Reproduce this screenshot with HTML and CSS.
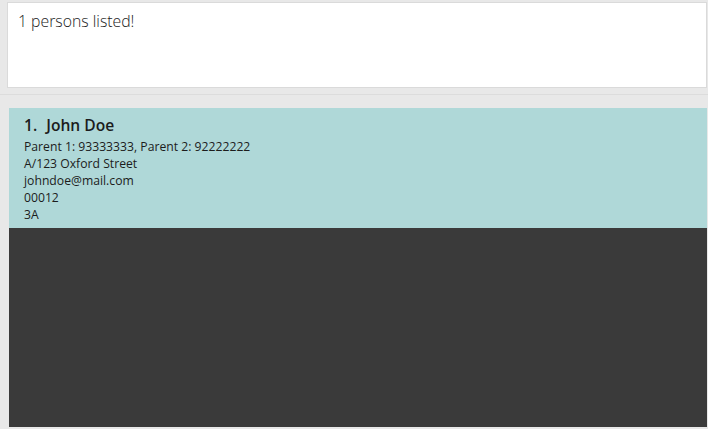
FILE: index.html
```html
<!DOCTYPE html>
<html>
<head>
<meta charset="utf-8">
<link rel="stylesheet" href="styles.css">
</head>
<body>
<div class="app">
  <div class="result-pane">
    <div class="result-box">1 persons listed!</div>
  </div>
  <div class="list-pane">
    <div class="list">
      <div class="card">
        <div class="name"><span class="idx">1.</span>John Doe</div>
        <div class="line">Parent 1: 93333333, Parent 2: 92222222</div>
        <div class="line">A/123 Oxford Street</div>
        <div class="line">johndoe@mail.com</div>
        <div class="line">00012</div>
        <div class="line">3A</div>
      </div>
      <div class="empty"></div>
    </div>
  </div>
</div>
</body>
</html>
```

FILE: styles.css
```css
html, body {
  margin: 0;
  padding: 0;
  width: 708px;
  height: 429px;
  overflow: hidden;
  background: #e8e8e8;
  font-family: "Open Sans", "Noto Sans", sans-serif;
}
.app {
  display: flex;
  flex-direction: column;
  height: 429px;
}
.result-pane {
  padding: 2px 1px 6px 7px;
  border-bottom: 1px solid #dcdcdc;
}
.result-box {
  height: 86px;
  background: #fff;
  border: 1px solid #dadada;
  padding: 8px 10px;
  box-sizing: border-box;
  font-size: 15.8px;
  font-weight: 300;
  color: #222;
  line-height: 21px;
}
.list-pane {
  flex: 1;
  padding: 13px 1px 2px 9px;
  display: flex;
}
.list {
  flex: 1;
  display: flex;
  flex-direction: column;
  background: #3a3a3a;
}
.card {
  background: #afd8d8;
  height: 120px;
  box-sizing: border-box;
  padding: 7px 15px;
  color: #1c1c1c;
}
.name {
  font-size: 15.6px;
  font-weight: 600;
  line-height: 20px;
  margin-bottom: 3px;
}
.idx {
  margin-right: 9px;
}
.line {
  font-size: 12.2px;
  line-height: 17px;
}
.empty {
  flex: 1;
}
```
